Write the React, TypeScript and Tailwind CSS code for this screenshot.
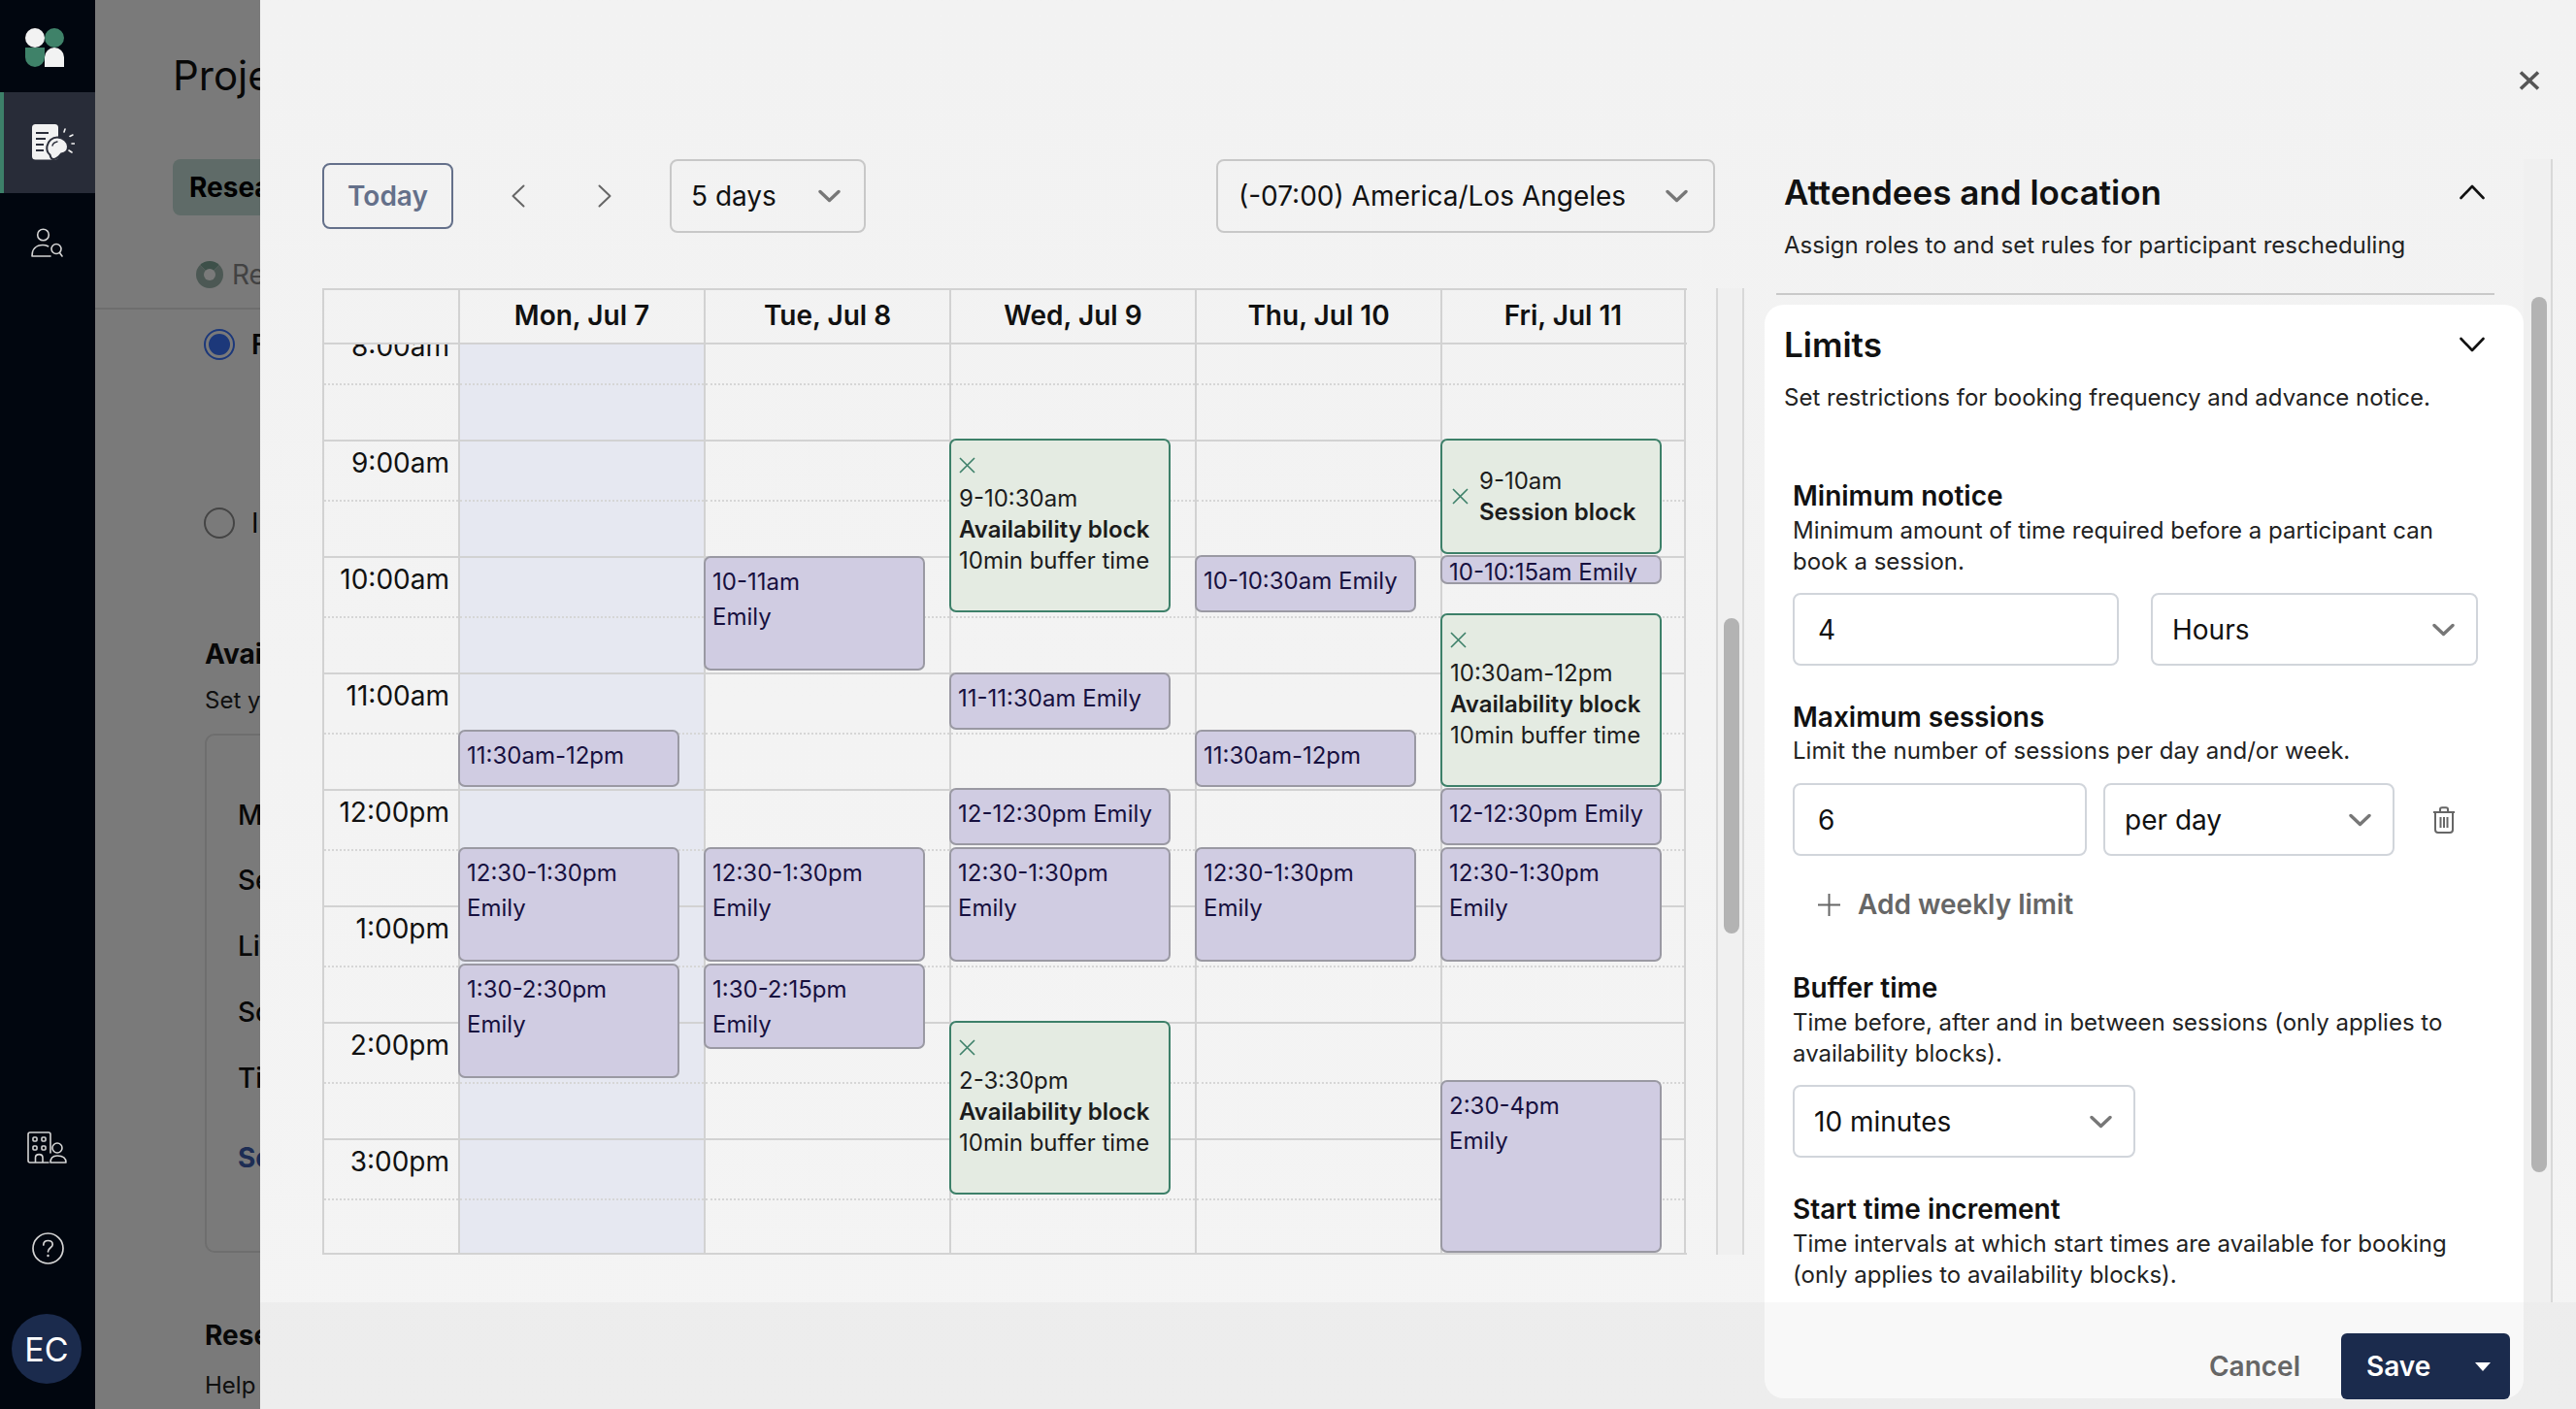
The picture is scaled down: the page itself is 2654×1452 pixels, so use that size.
import React from "react";

const font = "font-['Inter','Liberation_Sans',sans-serif]";

function Chevron({ className = "" }: { className?: string }) {
  return (
    <svg width="23" height="14" viewBox="0 0 23 14" fill="none" className={className}>
      <path d="M2 2.5 L11.5 11.5 L21 2.5" stroke="#777777" strokeWidth="3.4" strokeLinecap="round" strokeLinejoin="round" />
    </svg>
  );
}

function SectionChevron({ up = false }: { up?: boolean }) {
  return (
    <svg width="26" height="16" viewBox="0 0 26 16" fill="none" className={up ? "rotate-180" : ""}>
      <path d="M1.5 2 L13 14 L24.5 2" stroke="#111111" strokeWidth="2.6" strokeLinecap="round" strokeLinejoin="round" />
    </svg>
  );
}

function NavChevron({ right = false }: { right?: boolean }) {
  return (
    <svg width="14" height="24" viewBox="0 0 14 24" fill="none" className={right ? "rotate-180" : ""}>
      <path d="M12.5 1.5 L1.5 12 L12.5 22.5" stroke="#666666" strokeWidth="2" strokeLinecap="round" strokeLinejoin="round" />
    </svg>
  );
}

function SmallX() {
  return (
    <svg width="17" height="17" viewBox="0 0 17 17" fill="none" className="shrink-0">
      <path d="M1 1 L16 16 M16 1 L1 16" stroke="#3d8069" strokeWidth="1.6" />
    </svg>
  );
}

function Logo() {
  return (
    <svg width="40" height="40" viewBox="0 0 40 40">
      <circle cx="10" cy="10" r="10" fill="#f2f2f2" />
      <circle cx="30" cy="10" r="10" fill="#3f8269" />
      <path d="M0 20 H20 V30 A10 10 0 0 1 0 30 Z" fill="#3f8269" />
      <path d="M20 40 V30 A10 10 0 0 1 40 30 V40 Z" fill="#f2f2f2" />
    </svg>
  );
}

function IdeaIcon() {
  return (
    <svg width="44" height="38" viewBox="0 0 44 38" fill="none">
      <rect x="0" y="0" width="27" height="36.5" rx="3.5" fill="#f2f2f2" />
      <path d="M4 9 H17 M4 15 H14 M4 21 H12 M4 27 H12" stroke="#2b2e3a" strokeWidth="1.8" />
      <path d="M22 36 C19.5 36 19 34 18.5 31.5 C15.5 29 15 25 15.5 22.5 C16.5 17 21 13.5 26 13.5 C32 13.5 37 18 37 23 C37 27 34 30 30 30.5 C28 33 26 36 22 36 Z" fill="#f2f2f2" stroke="#2b2e3a" strokeWidth="2" />
      <path d="M21 22 C21.5 20 23.5 18.5 26 18" stroke="#2b2e3a" strokeWidth="1.4" strokeLinecap="round" />
      <path d="M33 8 L34 5 M39 12.5 L42 11 M41 20 H44 M38 27 L41 29" stroke="#f2f2f2" strokeWidth="1.6" strokeLinecap="round" />
    </svg>
  );
}

function PersonSearchIcon() {
  return (
    <svg width="34" height="31" viewBox="0 0 34 31" fill="none" stroke="#d4d4d4" strokeWidth="1.6">
      <circle cx="12.5" cy="7" r="5.8" />
      <path d="M1 29 C1 22 5 17.5 12 17.5 C14.5 17.5 16 18 17.5 18.8 M1 29 H20" strokeLinecap="round" />
      <circle cx="26" cy="21.5" r="5" />
      <path d="M29.5 25.5 L32 29" strokeLinecap="round" />
    </svg>
  );
}

function BuildingIcon() {
  return (
    <svg width="41" height="33" viewBox="0 0 41 33" fill="none" stroke="#d4d4d4" strokeWidth="1.6">
      <path d="M3 32 C1.5 32 1 31 1 30 V3 C1 2 1.5 1 3 1 H22 C23.5 1 24 2 24 3 V22 M3 32 H22" strokeLinecap="round" />
      <rect x="6" y="6" width="4" height="4" rx="1" />
      <rect x="15" y="6" width="4" height="4" rx="1" />
      <rect x="6" y="15" width="4" height="4" rx="1" />
      <rect x="15" y="15" width="4" height="4" rx="1" />
      <path d="M8.5 32 V27 C8.5 22.5 16 22.5 16 27 V32" />
      <circle cx="31" cy="17" r="5" />
      <path d="M24 32 C24 27 27 25 31 25 C36 25 40 27 40 32 Z" strokeLinejoin="round" />
    </svg>
  );
}

function HelpIcon() {
  return (
    <svg width="33" height="33" viewBox="0 0 33 33" fill="none" stroke="#d4d4d4" strokeWidth="1.7">
      <circle cx="16.5" cy="16.5" r="15.5" />
      <path d="M11.8 13 C11.8 10 14 8.5 16.5 8.5 C19.5 8.5 21.2 10.3 21.2 12.6 C21.2 15.8 16.5 15.8 16.5 19.8" strokeLinecap="round" />
      <circle cx="16.5" cy="24" r="1.2" fill="#d4d4d4" stroke="none" />
    </svg>
  );
}

function TrashIcon() {
  return (
    <svg width="24" height="28" viewBox="0 0 24 28" fill="none" stroke="#666666" strokeWidth="2">
      <path d="M1 6 H23 M8 6 V3 C8 2 8.7 1.2 10 1.2 H14 C15.3 1.2 16 2 16 3 V6" />
      <path d="M3 6 V24 C3 26 4 27 6 27 H18 C20 27 21 26 21 24 V6" />
      <path d="M8.5 11 V22 M12 11 V22 M15.5 11 V22" />
    </svg>
  );
}

const hours = ["8:00am", "9:00am", "10:00am", "11:00am", "12:00pm", "1:00pm", "2:00pm", "3:00pm"];

function HourCells({ labels = false }: { labels?: boolean }) {
  return (
    <>
      {hours.map((h) => (
        <div key={h}>
          <div className="h-[62px] border-t-2 border-[#d2d2d2] pr-[9px] pt-[4px] text-right text-[28px] leading-[36px] text-[#111111]">
            {labels ? h : null}
          </div>
          <div className="h-[58px] border-t-2 border-dotted border-[#d6d6d6]" />
        </div>
      ))}
    </>
  );
}

type Ev = { pos: string; a: string; b?: string };

function Session({ pos, a, b }: Ev) {
  return (
    <div className={`absolute -left-[2px] z-10 w-[228px] overflow-hidden rounded-[7px] border-2 border-[#9a99a3] bg-[#d0cce2] px-[7px] pt-[7px] text-[24px] leading-[36px] text-[#17103f] ${pos}`}>
      <div className="whitespace-nowrap">{a}</div>
      {b ? <div>{b}</div> : null}
    </div>
  );
}

function Availability({ pos, a, title = "Availability block" }: { pos: string; a: string; title?: string }) {
  return (
    <div className={`absolute -left-[2px] z-10 w-[228px] overflow-hidden rounded-[7px] border-2 border-[#3d8069] bg-[#e4ebe2] pl-[8px] pt-[17px] text-[24px] leading-[32px] text-[#1c1c1c] ${pos}`}>
      <SmallX />
      <div className="mt-[10px] whitespace-nowrap">{a}</div>
      <div className="font-semibold whitespace-nowrap">{title}</div>
      <div className="whitespace-nowrap">10min buffer time</div>
    </div>
  );
}

function DayColumn({ children, tint = false, last = false }: { children?: React.ReactNode; tint?: boolean; last?: boolean }) {
  return (
    <div className={`relative -mt-[22px] border-l-2 border-[#d2d2d2] ${tint ? "bg-[#e6e8f1]" : ""} ${last ? "border-r-2" : ""}`}>
      <HourCells />
      {children}
    </div>
  );
}

function SelectBox({ className, text, textClass }: { className: string; text: string; textClass: string }) {
  return (
    <div className={`flex items-center justify-between rounded-[8px] border-2 text-[28px] text-[#111111] ${className}`}>
      <span className={textClass}>{text}</span>
      <Chevron />
    </div>
  );
}

function Calendar() {
  const days = ["Mon, Jul 7", "Tue, Jul 8", "Wed, Jul 9", "Thu, Jul 10", "Fri, Jul 11"];
  return (
    <div className="h-[996px] w-[1406px] overflow-hidden border-2 border-l-2 border-[#d2d2d2] border-r-0">
      <div className="grid h-[56px] grid-cols-[138px_253px_253px_253px_253px_253px] border-b-2 border-[#d2d2d2] -mr-0">
        <div />
        {days.map((d, i) => (
          <div key={d} className={`flex items-center justify-center border-l-2 border-[#d2d2d2] pb-[2px] text-[28px] font-semibold text-[#111111] ${i === 4 ? "border-r-2" : ""}`}>
            {d}
          </div>
        ))}
      </div>
      <div className="grid h-[936px] grid-cols-[138px_253px_253px_253px_253px_253px] overflow-hidden">
        <div className="-mt-[22px]">
          <HourCells labels />
        </div>
        <DayColumn tint>
          <Session pos="top-[419px] h-[59px]" a="11:30am-12pm" />
          <Session pos="top-[540px] h-[118px]" a="12:30-1:30pm" b="Emily" />
          <Session pos="top-[660px] h-[118px]" a="1:30-2:30pm" b="Emily" />
        </DayColumn>
        <DayColumn>
          <Session pos="top-[240px] h-[118px]" a="10-11am" b="Emily" />
          <Session pos="top-[540px] h-[118px]" a="12:30-1:30pm" b="Emily" />
          <Session pos="top-[660px] h-[88px]" a="1:30-2:15pm" b="Emily" />
        </DayColumn>
        <DayColumn>
          <Availability pos="top-[119px] h-[179px]" a="9-10:30am" />
          <Session pos="top-[360px] h-[59px]" a="11-11:30am Emily" />
          <Session pos="top-[479px] h-[59px]" a="12-12:30pm Emily" />
          <Session pos="top-[540px] h-[118px]" a="12:30-1:30pm" b="Emily" />
          <Availability pos="top-[719px] h-[179px]" a="2-3:30pm" />
        </DayColumn>
        <DayColumn>
          <Session pos="top-[239px] h-[59px]" a="10-10:30am Emily" />
          <Session pos="top-[419px] h-[59px]" a="11:30am-12pm" />
          <Session pos="top-[540px] h-[118px]" a="12:30-1:30pm" b="Emily" />
        </DayColumn>
        <DayColumn last>
          <div className="absolute -left-[2px] top-[119px] z-10 flex h-[119px] w-[228px] items-center gap-[11px] rounded-[7px] border-2 border-[#3d8069] bg-[#e4ebe2] pl-[10px] text-[24px] leading-[32px] text-[#1c1c1c]">
            <SmallX />
            <div>
              <div>9-10am</div>
              <div className="font-semibold">Session block</div>
            </div>
          </div>
          <div className="absolute -left-[2px] top-[239px] z-10 h-[30px] w-[228px] overflow-hidden rounded-[7px] border-2 border-[#9a99a3] bg-[#d0cce2] pl-[7px] text-[24px] leading-[32px] whitespace-nowrap text-[#17103f]">
            10-10:15am Emily
          </div>
          <Availability pos="top-[299px] h-[179px]" a="10:30am-12pm" />
          <Session pos="top-[479px] h-[59px]" a="12-12:30pm Emily" />
          <Session pos="top-[540px] h-[118px]" a="12:30-1:30pm" b="Emily" />
          <Session pos="top-[780px] h-[178px]" a="2:30-4pm" b="Emily" />
        </DayColumn>
      </div>
    </div>
  );
}

function SettingsPanel() {
  return (
    <div className="ml-[21px] w-[782px]">
      <div className="flex h-[44px] items-center justify-between pl-[20px] pr-[40px] mt-[12px]">
        <h2 className="text-[35px] leading-[44px] font-semibold text-[#111111]">Attendees and location</h2>
        <SectionChevron up />
      </div>
      <p className="mt-[17px] pl-[20px] text-[24px] leading-[32px] text-[#222222]">Assign roles to and set rules for participant rescheduling</p>
      <div className="ml-[12px] mt-[33px] h-[2px] w-[740px] bg-[#c9c9c9]" />
      <div className="mt-[10px] h-[1127px] overflow-hidden rounded-[20px] bg-white pl-[20px] pr-[40px] pt-[19px] text-[#222222]">
        <div className="flex h-[44px] items-center justify-between">
          <h2 className="text-[35px] leading-[44px] font-semibold text-[#111111]">Limits</h2>
          <SectionChevron />
        </div>
        <p className="mt-[17px] text-[24px] leading-[32px]">Set restrictions for booking frequency and advance notice.</p>

        <div className="ml-[9px]">
          <h3 className="mt-[67px] text-[28px] leading-[36px] font-semibold text-[#111111]">Minimum notice</h3>
          <p className="mt-[2px] text-[24px] leading-[32px]">
            Minimum amount of time required before a participant can<br />book a session.
          </p>
          <div className="mt-[16px] flex gap-[33px]">
            <div className="flex h-[75px] w-[336px] items-center rounded-[8px] border-2 border-[#d1d5db] pl-[24px] text-[28px] text-[#111111]">4</div>
            <SelectBox className="h-[75px] w-[337px] border-[#d1d5db] pl-[20px] pr-[22px]" text="Hours" textClass="" />
          </div>

          <h3 className="mt-[35px] text-[28px] leading-[36px] font-semibold text-[#111111]">Maximum sessions</h3>
          <p className="mt-[1px] text-[24px] leading-[32px]">Limit the number of sessions per day and/or week.</p>
          <div className="mt-[17px] flex items-center gap-[17px]">
            <div className="flex h-[75px] w-[303px] items-center rounded-[8px] border-2 border-[#d1d5db] pl-[24px] text-[28px] text-[#111111]">6</div>
            <SelectBox className="h-[75px] w-[300px] border-[#d1d5db] pl-[20px] pr-[22px]" text="per day" textClass="" />
            <span className="ml-[22px]"><TrashIcon /></span>
          </div>
          <div className="mt-[32px] flex h-[36px] items-center gap-[18px] pl-[26px] text-[28px] font-semibold text-[#666666]">
            <svg width="23" height="23" viewBox="0 0 23 23" fill="none">
              <path d="M11.5 0 V23 M0 11.5 H23" stroke="#666666" strokeWidth="2" />
            </svg>
            <span>Add weekly limit</span>
          </div>

          <h3 className="mt-[50px] text-[28px] leading-[36px] font-semibold text-[#111111]">Buffer time</h3>
          <p className="mt-[2px] text-[24px] leading-[32px]">
            Time before, after and in between sessions (only applies to<br />availability blocks).
          </p>
          <SelectBox className="mt-[16px] h-[75px] w-[353px] border-[#d1d5db] pl-[20px] pr-[22px]" text="10 minutes" textClass="" />

          <h3 className="mt-[35px] text-[28px] leading-[36px] font-semibold text-[#111111]">Start time increment</h3>
          <p className="mt-[2px] text-[24px] leading-[32px]">
            Time intervals at which start times are available for booking<br />(only applies to availability blocks).
          </p>
        </div>
      </div>
    </div>
  );
}

function Behind() {
  return (
    <div className="min-w-0 flex-1 overflow-hidden bg-white pl-[80px] pt-[50px] text-[#111111]">
      <div className="text-[42px] leading-[56px]">Proje</div>
      <div className="mt-[58px] flex h-[58px] w-[600px] items-center rounded-[8px] bg-[#c6dfd9] pl-[17px] text-[28px] font-bold text-black">Resea</div>
      <div className="ml-[24px] mt-[43px] flex h-[36px] items-center gap-[9px] text-[28px] text-[#8a8a8a]">
        <span className="h-[28px] w-[28px] rounded-full border-[8px] border-[#9fb9b0] border-t-[#7fa898]" />
        Re
      </div>
      <div className="-ml-[80px] mt-[16px] h-[2px] bg-[#e5e5e5]" />
      <div className="ml-[32px] mt-[20px] flex h-[32px] items-center gap-[17px] text-[28px] font-semibold">
        <span className="flex h-[32px] w-[32px] items-center justify-center rounded-full border-2 border-[#3b75ff]">
          <span className="h-[22px] w-[22px] rounded-full bg-[#3b75ff]" />
        </span>
        F
      </div>
      <div className="ml-[32px] mt-[152px] flex h-[32px] items-center gap-[17px] text-[28px]">
        <span className="h-[32px] w-[32px] rounded-full border-2 border-[#8e8e8e]" />
        I
      </div>
      <div className="ml-[33px] mt-[101px] text-[28px] leading-[36px] font-bold">Avai</div>
      <div className="ml-[33px] mt-[14px] text-[24px] leading-[32px] text-[#222222]">Set y</div>
      <div className="ml-[33px] mt-[18px] h-[535px] w-[600px] rounded-[10px] border-2 border-[#e5e5e5] pl-[32px] pt-[64px] text-[28px] leading-[36px] font-medium">
        <div>M</div>
        <div className="mt-[31px]">Se</div>
        <div className="mt-[32px]">Li</div>
        <div className="mt-[32px]">So</div>
        <div className="mt-[32px]">Ti</div>
        <div className="mt-[46px] font-bold text-[#3d5eb0]">Se</div>
      </div>
      <div className="ml-[33px] mt-[67px] text-[28px] leading-[36px] font-bold">Rese</div>
      <div className="ml-[33px] mt-[18px] text-[24px] leading-[32px] text-[#222222]">Help</div>
    </div>
  );
}

export default function App() {
  return (
    <div className={`relative flex h-[1452px] w-[2654px] overflow-hidden ${font}`}>
      <nav className="relative z-30 flex h-full w-[98px] shrink-0 flex-col bg-[#01060f]">
        <div className="flex h-[95px] items-center pb-[4px] pl-[26px] pt-[7px]"><Logo /></div>
        <div className="flex h-[104px] items-center border-l-4 border-[#3d8069] bg-[#282c38] pl-[29px]"><IdeaIcon /></div>
        <div className="flex h-[102px] items-center pl-[32px]"><PersonSearchIcon /></div>
        <div className="mt-auto flex items-center pl-[28px]"><BuildingIcon /></div>
        <div className="mt-[71px] flex justify-center"><HelpIcon /></div>
        <div className="mb-[26px] ml-[12px] mt-[51px] flex h-[72px] w-[72px] items-center justify-center rounded-full bg-[#1b2b4d] text-[34px] text-white">EC</div>
      </nav>

      <Behind />

      <div className="absolute inset-0 z-10 bg-[rgba(0,0,0,0.52)]" />

      <div className="absolute inset-y-0 left-[268px] right-0 z-20 flex bg-linear-to-b from-[#f2f2f2] to-[#f4f4f4] pl-[64px] pt-[164px]">
        <div className="w-[1465px] shrink-0">
          <div className="flex h-[76px] w-[1435px] items-center">
            <button className="flex h-[68px] w-[135px] items-center justify-center rounded-[8px] border-2 border-[#64708a] text-[28px] font-semibold text-[#64708a]">Today</button>
            <span className="ml-[45px] flex h-[44px] w-[44px] items-center justify-center"><NavChevron /></span>
            <span className="ml-[45px] flex h-[44px] w-[44px] items-center justify-center"><NavChevron right /></span>
            <SelectBox className="ml-[45px] h-[76px] w-[202px] border-[#c8c8c8] pl-[20px] pr-[24px]" text="5 days" textClass="" />
            <SelectBox className="ml-auto h-[76px] w-[514px] border-[#c8c8c8] pl-[21px] pr-[26px]" text="(-07:00) America/Los Angeles" textClass="" />
          </div>
          <div className="mt-[57px] flex">
            <Calendar />
            <div className="ml-[30px] h-[996px] w-[29px] border-x-2 border-[#d8d8d8] bg-[#f0f0f0] pl-[6px] pt-[340px]">
              <div className="h-[325px] w-[16px] rounded-full bg-[#b3b3b3]" />
            </div>
          </div>
        </div>

        <SettingsPanel />

        <div className="ml-0 h-[1178px] w-[30px] border-r-2 border-[#d8d8d8] bg-[#f0f0f0] pl-[8px] pt-[142px]">
          <div className="h-[902px] w-[16px] rounded-full bg-[#b3b3b3]" />
        </div>

        <button className="absolute left-[2327px] top-[73px]" aria-label="Close">
          <svg width="22" height="20" viewBox="0 0 22 20" fill="none">
            <path d="M2 1.5 L20 18.5 M20 1.5 L2 18.5" stroke="#555555" strokeWidth="3.6" />
          </svg>
        </button>

        <div className="absolute inset-x-0 bottom-0 flex h-[110px] items-start justify-end bg-[rgba(0,0,0,0.027)] pr-[68px] pt-[32px]">
          <span className="mr-[42px] flex h-[68px] items-center text-[28px] font-semibold text-[#666666]">Cancel</span>
          <button className="flex h-[68px] w-[174px] items-center justify-between rounded-[6px] bg-[#1b2b4d] pl-[26px] pr-[20px] text-[28px] font-semibold text-white">
            Save
            <svg width="16" height="9" viewBox="0 0 16 9"><path d="M0 0 H16 L8 9 Z" fill="#ffffff" /></svg>
          </button>
        </div>
      </div>
    </div>
  );
}
